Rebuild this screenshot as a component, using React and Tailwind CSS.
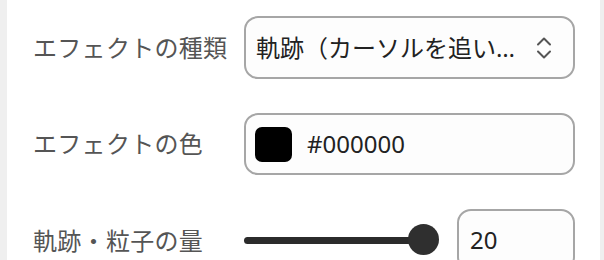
import React from "react";

export default function App() {
  const font = { fontFamily: '"Noto Sans", "Noto Sans CJK JP", sans-serif' };
  return (
    <div className="flex h-[260px] w-[604px] overflow-hidden bg-[#efefef]" style={font}>
      <div className="ml-[7px] flex w-[593px] shrink-0 flex-col gap-[34px] bg-white pl-[26px] pr-[25px] pt-[16px]">
        <div className="flex h-[63px] shrink-0 items-center">
          <div className="w-[211px] shrink-0 text-[24px] tracking-[0.3px] text-[#555]">エフェクトの種類</div>
          <div className="flex h-full flex-1 items-center justify-between rounded-[14px] border-2 border-[#a6a6a6] bg-[#fdfdfd] pl-[10px] pr-[21px]">
            <span className="w-[266px] truncate text-[24px] text-[#222]">軌跡（カーソルを追いかける）</span>
            <svg width="16" height="24" viewBox="0 0 16 24" fill="none" stroke="#555" strokeWidth="2" strokeLinecap="round" strokeLinejoin="round">
              <path d="M2 8.5 L8 2.5 L14 8.5" />
              <path d="M2 15.5 L8 21.5 L14 15.5" />
            </svg>
          </div>
        </div>
        <div className="flex h-[62px] shrink-0 items-center">
          <div className="w-[211px] shrink-0 text-[24px] tracking-[0.3px] text-[#555]">エフェクトの色</div>
          <div className="flex h-full flex-1 items-center gap-[15px] rounded-[14px] border-2 border-[#a6a6a6] bg-[#fdfdfd] pl-[9px]">
            <div className="h-[35px] w-[37px] rounded-[7px] bg-black" />
            <span className="text-[24px] text-[#222]">#000000</span>
          </div>
        </div>
        <div className="flex h-[62px] shrink-0 items-start">
          <div className="flex h-full w-[211px] shrink-0 items-center pt-[2px] text-[24px] tracking-[0.3px] text-[#555]">軌跡・粒子の量</div>
          <div className="flex flex-1 items-start gap-[18px]">
            <div className="relative flex h-[62px] w-[195px] items-center">
              <div className="h-[7px] w-[180px] rounded-full bg-[#2b2b2b]" />
              <div className="absolute left-[164px] top-[15px] h-[31px] w-[31px] rounded-full bg-[#2f2f2f]" />
            </div>
            <div className="flex h-[62px] flex-1 items-center rounded-[14px] border-2 border-[#a6a6a6] bg-[#fdfdfd] pl-[11px] text-[24px] text-[#222]">
              20
            </div>
          </div>
        </div>
      </div>
    </div>
  );
}
